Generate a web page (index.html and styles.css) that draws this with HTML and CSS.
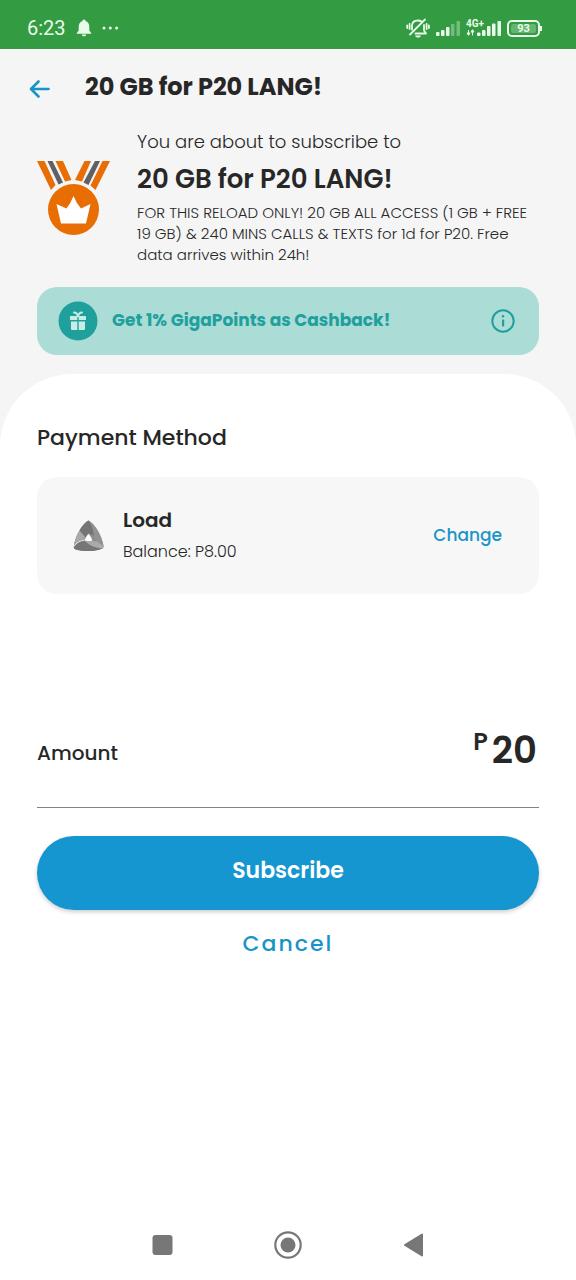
FILE: index.html
```html
<!DOCTYPE html>
<html lang="en">
<head>
<meta charset="utf-8">
<meta name="viewport" content="width=device-width, initial-scale=1">
<title>Subscribe</title>
<link rel="stylesheet" href="styles.css">
</head>
<body>
<div class="status-bar">
  <div class="status-left">
    <span class="clock">6:23</span>
    <svg width="16" height="18" viewBox="0 0 16 18" aria-hidden="true"><path d="M8 0.500a1.600 1.600 0 0 1 1.600 1.600C12.200 3 13.300 5 13.300 8v3.500L15.200 14v.7H.8V14l1.900-2.500V8c0-3 1.100-5 3.700-5.900A1.600 1.600 0 0 1 8 .5zM5.800 15.500h4.400C10 16.800 9.200 17.300 8 17.300s-2-.5-2.200-1.800z"/></svg>
    <svg width="17" height="4" viewBox="0 0 17 4" aria-hidden="true"><circle cx="2" cy="2" r="1.500"/><circle cx="8.300" cy="2" r="1.500"/><circle cx="14.600" cy="2" r="1.500"/></svg>
  </div>
  <div class="status-right">
    <svg width="24" height="22" viewBox="0 0 24 22" aria-hidden="true"><g fill="none" stroke="currentColor" stroke-width="1.800" stroke-linecap="round" stroke-linejoin="round"><path d="M6 12.500V9c0-3.500 2.500-5.500 6-5.500 1.500 0 2.500.3 3.500 1M18 8v5.500l2 3H9.500"/><path d="M4 17.500L19 2.500M1.200 8.500v2.500M3.600 7v5M20.600 7v5M22.900 8.500v2.500"/></g><path d="M9 18.500h6c-.5 1.600-1.500 2-3 2s-2.500-.4-3-2z"/></svg>
    <svg width="26" height="18" viewBox="0 0 26 18" aria-hidden="true"><rect x="1" y="13" width="3.500" height="4" rx="1"/><rect x="6" y="11" width="3.500" height="6" rx="1"/><rect x="11" y="8" width="3.500" height="9" rx="1"/><g opacity=".35"><rect x="16" y="5" width="3.500" height="12" rx="1"/><rect x="21.500" y="2" width="3.500" height="15" rx="1"/></g></svg>
    <div class="network">
      <span class="network-type">4G+</span>
      <svg width="36" height="18" viewBox="0 0 36 18" aria-hidden="true"><path d="M2.500 11v5M1 14l1.500 2.300L4 14zM6.500 16.500v-5M5 13l1.500-2.300L8 13z" stroke="currentColor" stroke-width="1"/><rect x="11" y="13.500" width="3.500" height="3.500" rx="1"/><rect x="16" y="11" width="3.500" height="6" rx="1"/><rect x="21" y="7" width="3.500" height="10" rx="1"/><rect x="26" y="4.500" width="3.500" height="12.500" rx="1"/><rect x="31.500" y="2" width="3.500" height="15" rx="1"/></svg>
    </div>
    <div class="battery"><span class="battery-level">93</span></div>
  </div>
</div>
<main class="page">
  <header class="app-bar">
    <button class="back" type="button" aria-label="Back"><svg width="22" height="20" viewBox="0 0 22 20" aria-hidden="true"><path d="M19.500 10H2M9.500 2.500L2 10l7.500 7.500" fill="none" stroke="currentColor" stroke-width="2.600" stroke-linecap="round" stroke-linejoin="round"/></svg></button>
    <h1 class="title">20 GB for P20 LANG!</h1>
  </header>
  <section class="promo">
    <svg class="medal" width="74" height="76" viewBox="0 0 74 76" aria-hidden="true"><g fill="#e86e04"><path d="M0 1h7.500L18.500 25l-4.500 5zM18.500 1H26l8.500 19-6.500 1.500zM47.500 1H54L45 21.500l-7-1.500zM65.500 1H73L58.500 30l-5-4.500z"/><circle cx="36.500" cy="49.500" r="25.500"/></g><path d="M10.500 1h5L26 22.500l-4.500 2zM58 1h5L51.500 25 46.500 22.500z" fill="#606164"/><path d="M19.500 44l10 4.500q4-5 7-12.500 3 7.500 7.500 12.500L53.500 44 49 63.500H24z" fill="#fff"/></svg>
    <div class="promo-copy">
      <p class="lead">You are about to subscribe to</p>
      <h2 class="promo-name">20 GB for P20 LANG!</h2>
      <p class="details">FOR THIS RELOAD ONLY! 20 GB ALL ACCESS (1 GB + FREE 19 GB) &amp; 240 MINS CALLS &amp; TEXTS for 1d for P20. Free data arrives within 24h!</p>
    </div>
  </section>
  <section class="cashback">
    <svg width="40" height="40" viewBox="0 0 40 40" aria-hidden="true"><circle cx="20" cy="20" r="19.500" fill="#20a09c"/><g fill="#c9ece7"><rect x="12" y="15" width="7.300" height="4" rx=".6"/><rect x="20.700" y="15" width="7.300" height="4" rx=".6"/><path d="M13 20.500h6.300V29H14a1 1 0 0 1-1-1zM20.700 20.500H27V28a1 1 0 0 1-1 1h-5.300z"/></g><path d="M20 15.500c-.5-2.500-1.500-4-4-4M20 15.500c.5-2.500 1.500-4 4-4" fill="none" stroke="#c9ece7" stroke-width="2" stroke-linecap="round"/></svg>
    <strong class="cashback-text">Get 1% GigaPoints as Cashback!</strong>
    <button class="info" type="button" aria-label="Cashback information"><svg width="24" height="24" viewBox="0 0 24 24" aria-hidden="true"><circle cx="12" cy="12" r="10.700" fill="none" stroke="currentColor" stroke-width="2"/><circle cx="12" cy="7.300" r="1.200"/><rect x="11" y="10.500" width="2.200" height="7" rx=".8"/></svg></button>
  </section>
  <div class="sheet">
    <h2 class="section-title">Payment Method</h2>
    <section class="method">
      <svg width="32" height="32" viewBox="0 0 32 32" aria-hidden="true">
        <path d="M15.500 .5C10 3 2 15 .8 27c0 1.500 1 2 2.500 2.500 8 2 18 2 25-.5 1.500-.5 2.500-1.500 2.300-3C29 16 22 4 15.500 .5z" fill="#8f8f8f"/>
        <path d="M15.500 .5C12.500 2 9 6 6.500 10.500l5.500 7.500 3.500-4.500 5.500 2C20.500 9 18.500 3 15.500 .5z" fill="#757575"/>
        <path d="M15.500 .5c2.500 2 4.500 8 5.500 15l3 6.500 6.500 4C29 16 22 4 15.500 .5z" fill="#929292"/>
        <path d="M6.500 10.500C3.500 15 1.500 21 1 25.500 3.500 22 7 19.500 11.500 19l1-1.500z" fill="#aaaaaa"/>
        <path d="M.8 27C4 23 8 20.800 12 21l5 3 13 4c-4 3.500-21 4-26.700 1.800C1.500 29 .8 28.500 .8 27z" fill="#767676"/>
        <path d="M12 21h8l4 .500 6.600 4.500c0 1-.3 2-1.600 2.500-6-.5-12-2.500-17-7.500z" fill="#aaaaaa"/>
        <path d="M15.500 13.800c1.500 1.500 3 4.200 3.800 6.700-2.300.8-4.800.8-7.500 0 .7-2.500 2-5 3.700-6.700z" fill="#fff"/>
        <path d="M.8 26.500C3.500 22.500 7 20.500 12 20" fill="none" stroke="#e9e9e9" stroke-width="1"/>
      </svg>
      <div class="method-copy">
        <h3 class="method-name">Load</h3>
        <p class="balance">Balance: P8.00</p>
      </div>
      <button class="change" type="button">Change</button>
    </section>
    <section class="amount">
      <span class="amount-label">Amount</span>
      <span class="price"><span class="currency">P</span><span class="value">20</span></span>
    </section>
    <button class="subscribe" type="button">Subscribe</button>
    <button class="cancel" type="button">Cancel</button>
  </div>
</main>
<nav class="system-nav" aria-label="System navigation">
  <button class="nav-button" type="button" aria-label="Recent apps"><svg width="28" height="28" viewBox="0 0 28 28"><rect x="4.500" y="4" width="20" height="20" rx="3"/></svg></button>
  <button class="nav-button" type="button" aria-label="Home"><svg width="28" height="28" viewBox="0 0 28 28"><circle cx="14" cy="14" r="12.700" fill="none" stroke="currentColor" stroke-width="2.200"/><circle cx="14" cy="14" r="7.500"/></svg></button>
  <button class="nav-button" type="button" aria-label="Back"><svg width="28" height="28" viewBox="0 0 28 28"><path d="M5 14L22 3.500v21z" stroke="currentColor" stroke-width="2" stroke-linejoin="round"/></svg></button>
</nav>
</body>
</html>
```
FILE: styles.css
```css
* { box-sizing: border-box; }
body {
  margin: 0;
  min-height: 100vh;
  display: flex;
  flex-direction: column;
  background: #fff;
  color: #272727;
  font-family: Poppins, Inter, "Open Sans", sans-serif;
}
h1, h2, h3, p { margin: 0; }
button {
  padding: 0;
  border: 0;
  background: none;
  color: #1894c8;
  font: inherit;
  cursor: pointer;
}
svg { display: block; flex: none; fill: currentColor; }

.status-bar {
  display: flex;
  align-items: center;
  justify-content: space-between;
  padding: 12px 36px 5px 27px;
  background: #339c43;
  color: #e9fbe9;
}
.status-left, .status-right { display: flex; align-items: center; }
.status-left { gap: 10px; }
.status-right { gap: 5px; }
.clock { font: 20px/32px Roboto, sans-serif; }
.network { display: grid; }
.network > * { grid-area: 1 / 1; }
.network-type { font: 700 10px/10px Roboto, sans-serif; align-self: start; }
.battery {
  position: relative;
  width: 33px;
  padding: 2px;
  border: 2px solid;
  border-radius: 5px;
}
.battery::after {
  content: "";
  position: absolute;
  right: -4px;
  top: 4px;
  width: 2px;
  height: 5px;
  background: currentColor;
}
.battery-level {
  display: block;
  background: #66b571;
  border-radius: 2px;
  font: 700 11px/9px Roboto, sans-serif;
  text-align: center;
}

.page {
  flex: 1;
  display: flex;
  flex-direction: column;
  background: #f5f5f5;
}
.app-bar {
  display: flex;
  align-items: center;
  gap: 34px;
  padding: 20px 29px 0;
}
.back { padding-top: 3px; }
.title { font-size: 24px; line-height: 36px; font-weight: 700; }
.promo {
  display: flex;
  gap: 26px;
  padding: 23px 37px 0;
}
.medal { margin-top: 32px; }
.lead { font-size: 18px; line-height: 28px; font-weight: 300; }
.promo-name { padding: 5px 0; font-size: 26px; line-height: 36px; font-weight: 600; }
.details { font-size: 15px; line-height: 21px; font-weight: 300; }
.cashback {
  display: flex;
  align-items: center;
  gap: 14px;
  margin: 22px 37px 19px;
  padding: 14px 24px 14px 21px;
  border-radius: 20px;
  background: #abdcd6;
}
.cashback-text { flex: 1; padding-bottom: 2px; color: #20a09c; font-size: 17px; line-height: 24px; }
.info { color: #20a09c; }

.sheet {
  flex: 1;
  display: flex;
  flex-direction: column;
  padding: 47px 37px 0;
  border-radius: 72px 72px 0 0;
  background: #fff;
}
.section-title { font-size: 22px; line-height: 34px; font-weight: 500; }
.method {
  display: flex;
  align-items: center;
  gap: 18px;
  margin-top: 22px;
  padding: 27px 37px 26px 36px;
  border-radius: 20px;
  background: #f7f7f7;
}
.method-copy { flex: 1; }
.method-name { font-size: 20px; line-height: 32px; font-weight: 600; }
.balance { font-size: 16px; line-height: 32px; font-weight: 300; }
.change { padding-bottom: 2px; font-size: 17px; line-height: 24px; font-weight: 500; }
.amount {
  display: flex;
  align-items: center;
  justify-content: space-between;
  margin-top: 122px;
  padding: 6px 2px 29px 0;
  border-bottom: 1px solid #858585;
}
.amount-label { padding-top: 6px; font-size: 20px; line-height: 32px; font-weight: 500; }
.price { display: flex; gap: 4px; font-weight: 600; }
.currency { font-size: 24px; line-height: 40px; }
.value { font-size: 37px; line-height: 56px; }
.subscribe {
  margin-top: 28px;
  padding: 17px 19px 21px;
  border-radius: 40px;
  background: #1696d0;
  box-shadow: 0 2px 4px #0003;
  color: #fff;
  font-size: 22px;
  line-height: 36px;
  font-weight: 600;
}
.cancel {
  align-self: center;
  margin-top: 16px;
  font-size: 22px;
  line-height: 36px;
  font-weight: 500;
  letter-spacing: 2px;
}
.system-nav {
  display: flex;
  justify-content: center;
  gap: 98px;
  padding: 21px;
}
.nav-button { color: #777; }
```
